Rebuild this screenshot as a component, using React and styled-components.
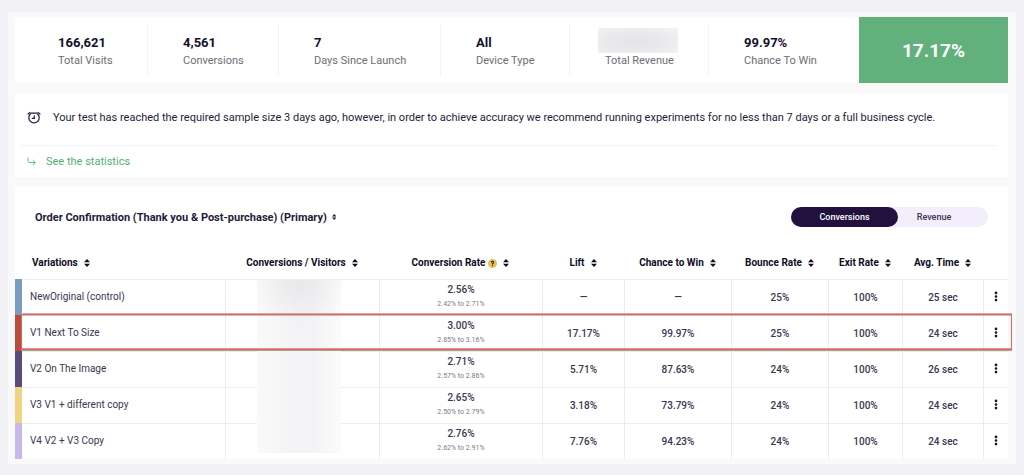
import React, { useState } from 'react';
import styled, { createGlobalStyle } from 'styled-components';

const GlobalStyle = createGlobalStyle`
  * {
    box-sizing: border-box;
  }

  body {
    margin: 0;
    background: #f1f1f6;
    color: #1f1b3a;
    font-family: Roboto, 'Liberation Sans', sans-serif;
    font-size: 10px;
  }

  button {
    font: inherit;
    color: inherit;
    border: none;
    background: none;
    padding: 0;
    cursor: pointer;
  }
`;

const Page = styled.main`
  margin: 12px 8px 11px;
  padding: 5px 8px 5px 7px;
  display: flex;
  flex-direction: column;
  gap: 10px;
  background: #f9f9f9;
`;

const Card = styled.section`
  background: #fff;
`;

const StatsCard = styled(Card)`
  display: grid;
  grid-template-columns: 133fr 131fr 162fr 129fr 139fr 150fr 149fr;
`;

const Stat = styled.div`
  margin: 7px 0;
  padding: 10px 0 6px ${props => props.$first ? 43 : 35}px;
  border-right: 1px solid ${props => props.$last ? 'transparent' : '#f3f3f3'};
`;

const StatValue = styled.div`
  position: relative;
  height: 18px;
  line-height: 18px;
  font-size: 13px;
  font-weight: 700;
  color: #14102e;
`;

const StatLabel = styled.div`
  line-height: 18px;
  font-size: 11px;
  color: #6d6d74;
`;

const HiddenValue = styled.span`
  position: absolute;
  top: -6px;
  left: -7px;
  width: 80px;
  height: 25px;
  background: radial-gradient(ellipse at 45% 55%, #e4e4e6 0%, #e9e9eb 45%, #f4f4f5 100%);
`;

const Uplift = styled.div`
  display: flex;
  align-items: center;
  justify-content: center;
  background: #62b17c;
  color: #fff;
  font-size: 19px;
  font-weight: 700;
`;

const Message = styled.p`
  margin: 0 11px 0 5px;
  padding: 17px 7px 19px;
  display: flex;
  align-items: center;
  gap: 12px;
  border-bottom: 1px solid #f3f3f3;
  font-size: 11px;
  line-height: 16px;
`;

const StatsLink = styled.a`
  display: flex;
  align-items: center;
  gap: 9px;
  padding: 8px 12px 7px;
  font-size: 11px;
  line-height: 16px;
  color: #52b06f;
  text-decoration: none;
`;

const Toolbar = styled.div`
  display: flex;
  align-items: center;
  justify-content: space-between;
  padding: 20px 20px 0;
`;

const GoalButton = styled.button`
  display: flex;
  align-items: center;
  gap: 5px;
  font-size: 11px;
  font-weight: 700;
`;

const Toggle = styled.div`
  display: flex;
  height: 20px;
  border-radius: 10px;
  background: #f3eefc;
`;

const ToggleButton = styled.button`
  width: ${props => props.$active ? 107 : 90}px;
  padding-right: ${props => props.$active ? 0 : 18}px;
  border-radius: 10px;
  font-size: 9px;
  font-weight: 500;
  background: ${props => props.$active ? '#22103f' : 'transparent'};
  color: ${props => props.$active ? '#fff' : '#3b3454'};
`;

const Table = styled.table`
  width: 100%;
  table-layout: fixed;
  border-collapse: separate;
  border-spacing: 0;
`;

const Th = styled.th`
  padding: 28px 0 8px ${props => props.$left ? 17 : 0}px;
  line-height: 16px;
  text-align: ${props => props.$left ? 'left' : 'center'};
  white-space: nowrap;
`;

const SortButton = styled.button`
  display: inline-flex;
  align-items: center;
  gap: 6px;
  height: 16px;
  font-weight: 700;
  color: #100c24;
  vertical-align: top;
`;

const HeadLabel = styled.span`
  display: inline-flex;
  align-items: center;
  gap: 3px;
`;

const Row = styled.tr`
  position: relative;

  &::after {
    content: '';
    display: ${props => props.$highlight ? 'block' : 'none'};
    position: absolute;
    z-index: 2;
    top: -1px;
    bottom: 1px;
    left: 6px;
    right: -4px;
    border: 1px solid #d9695c;
    box-shadow: 0 1px 0 #a5a0a0, 0 -1px 0 #e8a49c, inset 0 1px 0 #c5c0c6, inset 0 -1px 0 #e8938a;
    pointer-events: none;
  }
`;

const Td = styled.td`
  position: relative;
  height: 36px;
  padding: 0 0 1px;
  border-top: 1px solid #ececee;
  border-left: 1px solid #ececee;
  text-align: center;
  font-weight: 500;
  color: #3a3650;
`;

const NameCell = styled(Td)`
  padding-left: 8px;
  border-left: 7px solid ${props => props.$color};
  border-top: none;
  background: linear-gradient(#ececee, #ececee) top / 100% 1px no-repeat;
  background-clip: padding-box;
  text-align: left;
  font-weight: 400;
`;

const HiddenVisitors = styled.div`
  position: absolute;
  z-index: 1;
  top: 0;
  left: 20%;
  width: 55%;
  height: 173px;
  background:
    radial-gradient(ellipse 60% 25% at 50% 0, rgba(225, 225, 228, 0.6), transparent),
    linear-gradient(90deg, #fafafa, #f3f3f5 45%, #f3f3f5 65%, #fbfbfb);
`;

const Rate = styled.div`
  line-height: 14px;
`;

const Range = styled.div`
  line-height: 14px;
  font-size: 7px;
  font-weight: 400;
  color: #7b7987;
`;

const MenuButton = styled.button`
  display: block;
  margin: 0 auto;
`;

const SortIcon = ({ size = 8 }) => (
  <svg width={size * 3 / 4} height={size} viewBox="0 0 6 8" fill="currentColor" aria-hidden="true">
    <path d="M3 0 L6 3.3 H0 Z" />
    <path d="M0 4.7 H6 L3 8 Z" />
  </svg>
);

const AlarmIcon = () => (
  <svg width="14" height="14" viewBox="0 0 14 14" fill="none" stroke="currentColor" strokeWidth="1.2" strokeLinecap="round" aria-hidden="true">
    <path d="M3.4 3 A5.2 5.2 0 1 0 10.6 3 M4.2 2.2 H9.8" />
    <path d="M1 3 L3 1.4 M13 3 L11 1.4" />
    <path d="M7.3 4.8 V7.4 H5.4" />
  </svg>
);

const ArrowIcon = () => (
  <svg width="10" height="10" viewBox="0 0 10 10" fill="none" stroke="currentColor" strokeWidth="0.9" strokeLinecap="round" strokeLinejoin="round" aria-hidden="true">
    <path d="M1 1 V3.5 Q1 5.6 3 5.6 H8.2 M6 3.4 L8.3 5.6 L6 7.8" />
  </svg>
);

const HelpIcon = () => (
  <svg width="9" height="9" viewBox="0 0 9 9" aria-hidden="true">
    <circle cx="4.5" cy="4.5" r="4.5" fill="#e9c04e" />
    <path d="M3.4 3.2 Q3.6 2.3 4.6 2.4 Q5.8 2.6 5.5 3.7 Q5.3 4.2 4.5 4.8 M4.5 6.3 V6.5" fill="none" stroke="#2b2340" strokeWidth="1.1" strokeLinecap="round" />
  </svg>
);

const DotsIcon = () => (
  <svg width="4" height="11" viewBox="0 0 4 11" fill="#14102e" aria-hidden="true">
    <circle cx="2" cy="1.9" r="1.3" />
    <circle cx="2" cy="5.5" r="1.3" />
    <circle cx="2" cy="9.1" r="1.3" />
  </svg>
);

const stats = [
  { value: '166,621', label: 'Total Visits' },
  { value: '4,561', label: 'Conversions' },
  { value: '7', label: 'Days Since Launch' },
  { value: 'All', label: 'Device Type' },
  { value: null, label: 'Total Revenue' },
  { value: '99.97%', label: 'Chance To Win' }
];

const columns = [
  { title: 'Variations', width: 210 },
  { title: 'Conversions / Visitors', width: 154 },
  { title: 'Conversion Rate', width: 163, help: true },
  { title: 'Lift', width: 82 },
  { title: 'Chance to Win', width: 107 },
  { title: 'Bounce Rate', width: 97 },
  { title: 'Exit Rate', width: 74 },
  { title: 'Avg. Time', width: 81 }
];

const Col = styled.col`
  width: ${props => props.$share / 993 * 100}%;
`;

const variations = [
  { name: 'NewOriginal (control)', color: '#7a9cbf', rate: '2.56%', range: '2.42% to 2.71%', lift: '—', chance: '—', bounce: '25%', exit: '100%', time: '25 sec' },
  { name: 'V1 Next To Size', color: '#b94b40', rate: '3.00%', range: '2.85% to 3.16%', lift: '17.17%', chance: '99.97%', bounce: '25%', exit: '100%', time: '24 sec', highlight: true },
  { name: 'V2 On The Image', color: '#5c4a7c', rate: '2.71%', range: '2.57% to 2.86%', lift: '5.71%', chance: '87.63%', bounce: '24%', exit: '100%', time: '26 sec' },
  { name: 'V3 V1 + different copy', color: '#efd581', rate: '2.65%', range: '2.50% to 2.79%', lift: '3.18%', chance: '73.79%', bounce: '24%', exit: '100%', time: '24 sec' },
  { name: 'V4 V2 + V3 Copy', color: '#c8b8ea', rate: '2.76%', range: '2.62% to 2.91%', lift: '7.76%', chance: '94.23%', bounce: '24%', exit: '100%', time: '24 sec' }
];

const App = () => {
  const [metric, setMetric] = useState('Conversions');

  return (
    <>
      <GlobalStyle />
      <Page>
        <StatsCard>
          {stats.map((stat, index) => (
            <Stat key={stat.label} $first={index === 0} $last={index === stats.length - 1}>
              <StatValue>{stat.value || <HiddenValue />}</StatValue>
              <StatLabel>{stat.label}</StatLabel>
            </Stat>
          ))}
          <Uplift>17.17%</Uplift>
        </StatsCard>

        <Card>
          <Message>
            <AlarmIcon />
            Your test has reached the required sample size 3 days ago, however, in order to achieve accuracy we recommend running experiments for no less than 7 days or a full business cycle.
          </Message>
          <StatsLink href="#statistics">
            <ArrowIcon />
            See the statistics
          </StatsLink>
        </Card>

        <Card>
          <Toolbar>
            <GoalButton>
              Order Confirmation (Thank you &amp; Post-purchase) (Primary)
              <SortIcon size={6} />
            </GoalButton>
            <Toggle>
              {['Conversions', 'Revenue'].map(name => (
                <ToggleButton
                  key={name}
                  $active={metric === name}
                  aria-pressed={metric === name}
                  onClick={() => setMetric(name)}
                >
                  {name}
                </ToggleButton>
              ))}
            </Toggle>
          </Toolbar>

          <Table>
            <colgroup>
              {columns.map(column => <Col key={column.title} $share={column.width} />)}
              <Col $share={25} />
            </colgroup>
            <thead>
              <tr>
                {columns.map((column, index) => (
                  <Th key={column.title} scope="col" $left={index === 0}>
                    <SortButton>
                      <HeadLabel>
                        {column.title}
                        {column.help && <HelpIcon />}
                      </HeadLabel>
                      <SortIcon />
                    </SortButton>
                  </Th>
                ))}
                <Th as="td" />
              </tr>
            </thead>
            <tbody>
              {variations.map((item, index) => (
                <Row key={item.name} $highlight={item.highlight}>
                  <NameCell $color={item.color}>{item.name}</NameCell>
                  <Td>{index === 0 && <HiddenVisitors />}</Td>
                  <Td>
                    <Rate>{item.rate}</Rate>
                    <Range>{item.range}</Range>
                  </Td>
                  <Td>{item.lift}</Td>
                  <Td>{item.chance}</Td>
                  <Td>{item.bounce}</Td>
                  <Td>{item.exit}</Td>
                  <Td>{item.time}</Td>
                  <Td>
                    <MenuButton aria-label={`Options for ${item.name}`}>
                      <DotsIcon />
                    </MenuButton>
                  </Td>
                </Row>
              ))}
            </tbody>
          </Table>
        </Card>
      </Page>
    </>
  );
};

export default App;
